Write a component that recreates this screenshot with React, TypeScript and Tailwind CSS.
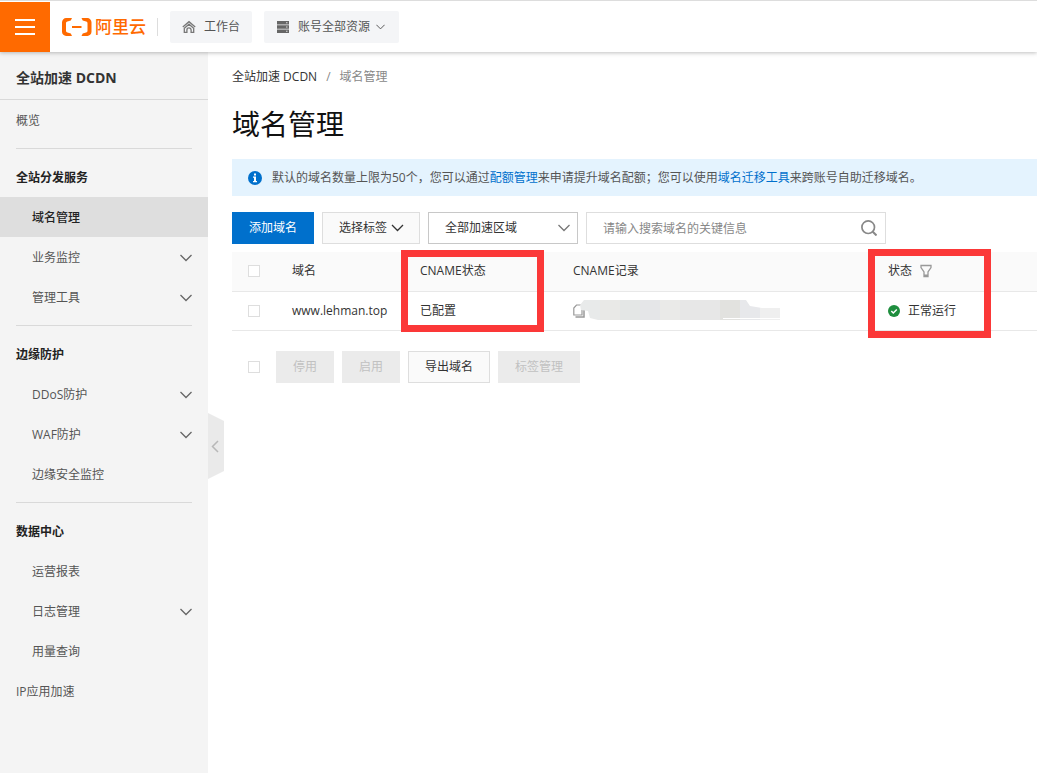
import React from "react";

const FONT = "font-['Open_Sans','Noto_Sans_CJK_SC',sans-serif]";

type NavItem = { label: string; expandable?: boolean; active?: boolean };
type NavGroup = { title: string; items: NavItem[] };

const groups: NavGroup[] = [
  {
    title: "全站分发服务",
    items: [
      { label: "域名管理", active: true },
      { label: "业务监控", expandable: true },
      { label: "管理工具", expandable: true },
    ],
  },
  {
    title: "边缘防护",
    items: [
      { label: "DDoS防护", expandable: true },
      { label: "WAF防护", expandable: true },
      { label: "边缘安全监控" },
    ],
  },
  {
    title: "数据中心",
    items: [
      { label: "运营报表" },
      { label: "日志管理", expandable: true },
      { label: "用量查询" },
    ],
  },
];

function Chevron({ className }: { className: string }) {
  return (
    <svg viewBox="0 0 12 8" className={className} fill="none" stroke="currentColor" strokeWidth="1.3" aria-hidden="true">
      <path d="M.5 1 6 6.5 11.5 1" />
    </svg>
  );
}

function Logo() {
  return (
    <a href="#home" className="ml-3 flex items-center gap-[3px] text-[#ff6a00]">
      <svg viewBox="0 0 30 18" className="h-[18px] w-[30px]" fill="currentColor" aria-hidden="true">
        <path d="M10 0H4.500A4.300 4.300 0 0 0 0 4.300v9.400A4.300 4.300 0 0 0 4.500 18H10l-1.200-2.500-3.400-.9A1.700 1.700 0 0 1 4 13V5a1.700 1.700 0 0 1 1.400-1.600l3.400-.9Z" />
        <path d="M19.500 0H25a4.300 4.300 0 0 1 4.500 4.300v9.400A4.300 4.300 0 0 1 25 18h-5.500l1.200-2.500 3.400-.9a1.700 1.700 0 0 0 1.400-1.600V5a1.700 1.700 0 0 0-1.400-1.600l-3.400-.9Z" />
        <path d="M10 8h9.500v2H10z" />
      </svg>
      <span className="text-[17px] leading-6 font-medium">阿里云</span>
    </a>
  );
}

function Header() {
  return (
    <header className="relative z-10 flex h-[52px] items-center border-t border-[#ddd] bg-white pt-px shadow-[0_1px_4px_rgba(0,0,0,0.25)]">
      <button type="button" aria-label="菜单" className="flex h-[50px] w-[50px] items-center justify-center bg-[#ff6a00]">
        <svg viewBox="0 0 20 16" className="h-4 w-5" fill="#fff" aria-hidden="true">
          <path d="M0 0h20v2H0zM0 7h20v2H0zM0 14h20v2H0z" />
        </svg>
      </button>
      <Logo />
      <div className="ml-[11px] h-[18px] w-px bg-[#ddd]" />
      <button type="button" className="ml-3 flex h-8 items-center gap-2 rounded-[2px] bg-[#f4f5f7] px-3 text-[#555]">
        <svg viewBox="0 0 14 14" className="h-[14px] w-[14px]" fill="none" stroke="#777" strokeWidth="1.300" aria-hidden="true">
          <path d="M.8 7 7 1.700 13.200 7" />
          <path d="M2.300 8.200v4.200h2.600V10a2.100 2.100 0 0 1 4.200 0v2.400h2.600V8.200L7 4.200Z" />
        </svg>
        工作台
      </button>
      <button type="button" className="ml-3 flex h-8 items-center gap-2 rounded-[2px] bg-[#f4f5f7] px-3 text-[#555]">
        <svg viewBox="0 0 14 14" className="h-[14px] w-[14px]" aria-hidden="true">
          <path fill="#666" d="M1 1h12v3.400H1zM1 5.300h12v3.400H1zM1 9.600h12V13H1z" />
          <path fill="#ddd" d="M10 2.200h1.500v1H10zM10 6.500h1.500v1H10zM10 10.800h1.500v1H10z" />
        </svg>
        <span className="flex items-center gap-1">
          账号全部资源
          <Chevron className="mx-0.5 h-2 w-[9px]" />
        </span>
      </button>
    </header>
  );
}

function Sidebar() {
  return (
    <aside className="relative w-[208px] shrink-0 bg-[#f4f4f4] text-[#555]">
      <h2 className="flex h-12 items-center border-b border-[#d9d9d9] px-4 pt-1 text-sm font-bold text-[#333]">
        全站加速 DCDN
      </h2>
      <nav>
        <a href="#overview" className="flex h-10 items-center px-4 pt-0.5">概览</a>
        {groups.map((group) => (
          <section key={group.title}>
            <hr className="mx-4 my-2 border-[#d9d9d9]" />
            <h3 className="flex h-10 items-center px-4 pt-0.5 font-semibold text-[#222]">{group.title}</h3>
            <ul>
              {group.items.map((item) => (
                <li key={item.label}>
                  <a
                    href={"#" + item.label}
                    className={
                      item.active
                        ? "flex h-10 items-center justify-between bg-[#dedede] pt-0.5 pr-4 pl-8 font-medium text-[#222]"
                        : "flex h-10 items-center justify-between pt-0.5 pr-4 pl-8"
                    }
                  >
                    {item.label}
                    {item.expandable && <Chevron className="h-2 w-3 text-[#666]" />}
                  </a>
                </li>
              ))}
            </ul>
          </section>
        ))}
        <a href="#ip" className="flex h-10 items-center px-4 pt-0.5">IP应用加速</a>
      </nav>
      <button type="button" aria-label="收起侧栏" className="absolute top-[361px] left-full h-[66px] w-4">
        <svg viewBox="0 0 16 66" className="h-full w-full" aria-hidden="true">
          <path fill="#eaeaea" d="M0 0 16 8v50L0 66Z" />
          <path fill="none" stroke="#b8b8b8" strokeWidth="1.500" d="M10 28 4.500 33.500 10 39" />
        </svg>
      </button>
    </aside>
  );
}

function Check({ label }: { label: string }) {
  return (
    <input
      type="checkbox"
      aria-label={label}
      className="block h-3 w-3 appearance-none border border-[#dedede] bg-white checked:bg-[#0070cc]"
    />
  );
}

function RedactedRecord() {
  return (
    <svg viewBox="0 0 200 22" className="h-[22px] w-[200px]" role="img" aria-label="CNAME记录">
      <clipPath id="record-shape">
        <path d="M0 5 4 0h162l4 6 12 2h18v12H18l-8-2-2-7-7-1Z" />
      </clipPath>
      <g clipPath="url(#record-shape)">
        <path fill="#e8eaea" d="M0 0h20v22H0z" />
        <path fill="#e9e9e7" d="M20 0h20v22H20z" />
        <path fill="#e4e7e6" d="M40 0h20v22H40z" />
        <path fill="#e5e6e8" d="M60 0h20v22H60z" />
        <path fill="#eaeae8" d="M80 0h20v22H80z" />
        <path fill="#e7e7e7" d="M100 0h40v22h-40z" />
        <path fill="#e2e2df" d="M140 0h20v22h-20z" />
        <path fill="#e7e8eb" d="M160 0h20v22h-20z" />
        <path fill="#efefef" d="M180 0h20v22h-20z" />
        <path fill="#fff" d="M143 18h57v1h-57z" />
      </g>
    </svg>
  );
}

function DomainTable() {
  return (
    <div className="relative mt-2">
      <table className="w-full table-fixed border-collapse text-left text-[#333]">
        <colgroup>
          <col className="w-11" />
          <col className="w-32" />
          <col className="w-[153px]" />
          <col className="w-[315px]" />
          <col />
        </colgroup>
        <thead>
          <tr className="h-[39px] border-b border-[#e8e8e8] bg-[#fafafa]">
            <th className="pl-4"><Check label="全选" /></th>
            <th className="pl-4 font-normal">域名</th>
            <th className="pl-4 font-normal">CNAME状态</th>
            <th className="pl-4 font-normal">CNAME记录</th>
            <th className="pl-4 font-normal">
              <span className="flex items-center gap-2">
                状态
                <button type="button" aria-label="筛选状态">
                  <svg viewBox="0 0 12 14" className="block h-[14px] w-3" fill="none" stroke="#999" strokeWidth="1.300" aria-hidden="true">
                    <path d="M1 1.500h10v2L8 8v4.500H4V8L1 3.500Z" />
                    <path strokeWidth="2" d="M4 11.500h4" />
                  </svg>
                </button>
              </span>
            </th>
          </tr>
        </thead>
        <tbody>
          <tr className="h-[39px] border-b border-[#e8e8e8]">
            <td className="pl-4"><Check label="选择 www.lehman.top" /></td>
            <td className="pl-4 whitespace-nowrap">www.lehman.top</td>
            <td className="pl-4">已配置</td>
            <td className="pl-4">
              <span className="flex items-center">
                <button type="button" aria-label="复制">
                  <svg viewBox="0 0 12 14" className="block h-[14px] w-3" fill="none" stroke="#999" aria-hidden="true">
                    <path fill="#fff" strokeWidth="1.200" d="M3.500 1H9v10H.8V4Z" />
                    <path strokeWidth="1.500" d="M11 4v9H2.500" />
                  </svg>
                </button>
                <span className="-ml-[5px]"><RedactedRecord /></span>
              </span>
            </td>
            <td className="pl-4">
              <span className="flex items-center gap-2">
                <svg viewBox="0 0 12 12" className="h-3 w-3" aria-hidden="true">
                  <circle cx="6" cy="6" r="6" fill="#1e8e3e" />
                  <path d="m3.300 6 2 2 3.500-3.500" fill="none" stroke="#fff" strokeWidth="1.500" />
                </svg>
                正常运行
              </span>
            </td>
          </tr>
        </tbody>
      </table>
      <div className="pointer-events-none absolute -top-0.5 left-[169px] h-[82px] w-[143px] border-[7px] border-[#fb3838]" />
      <div className="pointer-events-none absolute -top-[3px] left-[636px] h-[89px] w-[123px] border-[7px] border-[#fb3838]" />
    </div>
  );
}

export default function App() {
  return (
    <div className={"flex min-h-screen flex-col bg-white text-xs text-[#555] " + FONT}>
      <Header />
      <div className="flex flex-1">
        <Sidebar />
        <main className="min-w-0 flex-1 pt-4 pl-6">
          <nav aria-label="面包屑" className="flex h-[18px] items-center gap-[9px] text-[#888]">
            <a href="#dcdn" className="text-[#333]">全站加速 DCDN</a>
            <span>/</span>
            <span>域名管理</span>
          </nav>
          <h1 className="mt-[18px] text-[28px] leading-10 text-[#111]">域名管理</h1>
          <div className="mt-[15px] flex h-[37px] items-center gap-2 bg-[#e4f3fe] px-4">
            <svg viewBox="0 0 14 14" className="mr-0.5 h-[14px] w-[14px] shrink-0" aria-hidden="true">
              <circle cx="7" cy="7" r="7" fill="#0070cc" />
              <path fill="#fff" d="M6 2.500h2v2H6zM5 5.500h3V10h1v1.200H5V10h1V6.700H5z" />
            </svg>
            <p>
              默认的域名数量上限为50个，您可以通过
              <a href="#quota" className="text-[#0070cc]">配额管理</a>
              来申请提升域名配额；您可以使用
              <a href="#migrate" className="text-[#0070cc]">域名迁移工具</a>
              来跨账号自助迁移域名。
            </p>
          </div>
          <div className="mt-4 flex gap-2 text-[#333]">
            <button type="button" className="h-8 bg-[#0070cc] px-[17px] text-white">添加域名</button>
            <button type="button" className="flex h-8 items-center gap-1 border border-[#dedede] bg-[#fafafa] pr-[15px] pl-4">
              选择标签
              <Chevron className="h-2 w-[13px]" />
            </button>
            <div className="relative">
              <select aria-label="加速区域" className="h-8 w-[150px] appearance-none border border-[#c8c8c8] bg-white pl-4">
                <option>全部加速区域</option>
              </select>
              <Chevron className="pointer-events-none absolute top-3 right-2 h-2 w-3 text-[#777]" />
            </div>
            <div className="relative">
              <input
                type="text"
                aria-label="搜索域名"
                placeholder="请输入搜索域名的关键信息"
                className="h-8 w-[300px] border border-[#dedede] bg-white pr-8 pl-4 placeholder:text-[#888]"
              />
              <button type="button" aria-label="搜索" className="absolute top-2 right-[9px]">
                <svg viewBox="0 0 16 16" className="block h-4 w-4" fill="none" stroke="#888" strokeWidth="1.700" aria-hidden="true">
                  <circle cx="7.200" cy="7.200" r="6.300" />
                  <path strokeWidth="2" d="m11.800 11.800 3.700 3.700" />
                </svg>
              </button>
            </div>
          </div>
          <DomainTable />
          <div className="mt-5 flex items-center gap-2 pl-4">
            <span className="mr-2"><Check label="选择全部" /></span>
            <button type="button" disabled className="h-8 bg-[#ebebeb] px-[17px] text-[#c1c1c1]">停用</button>
            <button type="button" disabled className="h-8 bg-[#ebebeb] px-[17px] text-[#c1c1c1]">启用</button>
            <button type="button" className="h-8 border border-[#dedede] bg-[#fafafa] px-4 text-[#333]">导出域名</button>
            <button type="button" disabled className="h-8 bg-[#ebebeb] px-[17px] text-[#c1c1c1]">标签管理</button>
          </div>
        </main>
      </div>
    </div>
  );
}
